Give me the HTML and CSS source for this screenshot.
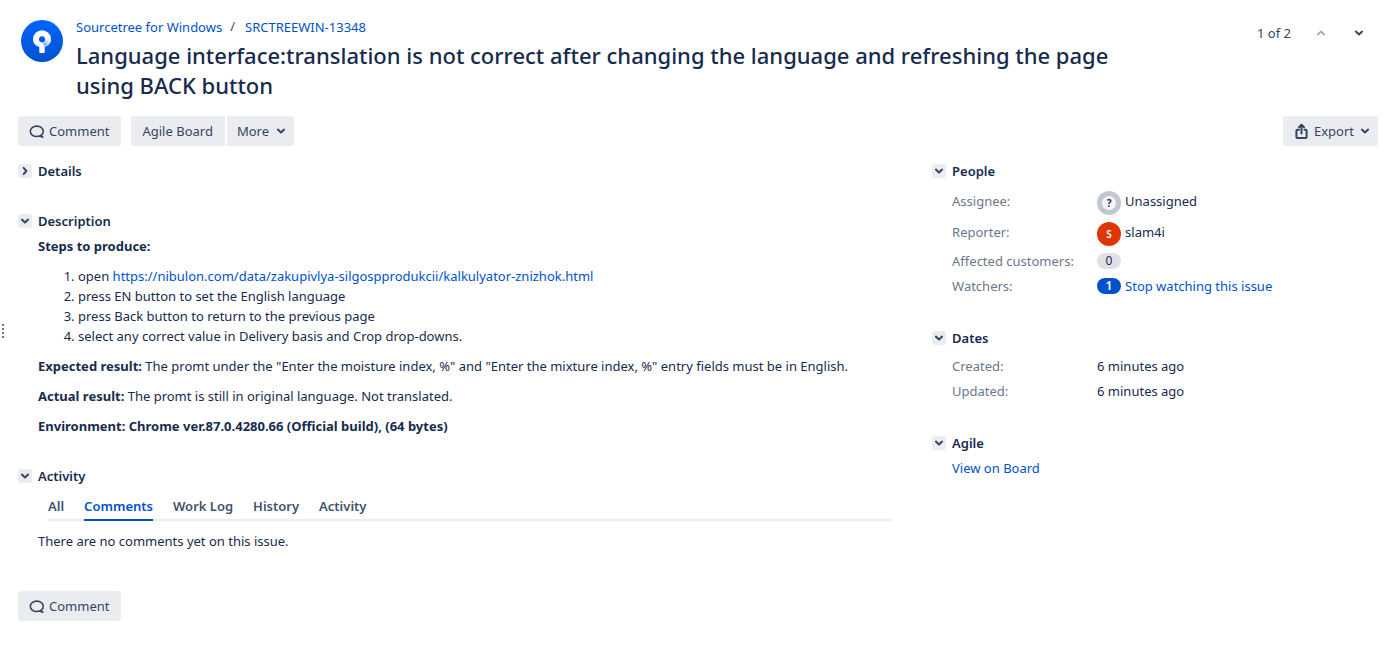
FILE: index.html
```html
<!DOCTYPE html>
<html lang="en">
<head>
<meta charset="utf-8">
<title>SRCTREEWIN-13348</title>
<link rel="stylesheet" href="styles.css">
</head>
<body>
<svg class="defs" aria-hidden="true">
  <symbol id="down" viewBox="0 0 14 14"><path d="M3.9 5.6 7 8.4l3.1-2.8" fill="none" stroke="currentColor" stroke-width="2" stroke-linecap="round" stroke-linejoin="round"/></symbol>
  <symbol id="right" viewBox="0 0 14 14"><path d="M5.6 3.9 8.4 7l-2.8 3.1" fill="none" stroke="currentColor" stroke-width="2" stroke-linecap="round" stroke-linejoin="round"/></symbol>
  <symbol id="bubble" viewBox="0 0 16 16"><path d="M12 12.500C13.500 11.600 14.300 10.100 14.300 8.300c0-3-2.900-5.200-6.500-5.200S1.300 5.300 1.300 8.300s2.900 5.200 6.500 5.200c.9 0 1.700-.1 2.500-.4l3.300 1" fill="none" stroke="currentColor" stroke-width="1.600" stroke-linejoin="round" stroke-linecap="round"/><path d="m11.600 12.600 2 1.500" stroke="currentColor" stroke-width="1.600" stroke-linecap="round"/></symbol>
</svg>
<button class="rail" aria-label="Expand sidebar"><i></i><i></i><i></i><i></i></button>
<header class="header">
  <svg class="logo" viewBox="0 0 42 42" aria-hidden="true">
    <defs>
      <linearGradient id="disc" x1="0" y1="0" x2="0" y2="1"><stop offset="0" stop-color="#0065ff"/><stop offset="1" stop-color="#0052cc"/></linearGradient>
      <linearGradient id="shade" x1="1" y1="0" x2="0" y2="1"><stop offset=".2" stop-color="#e6effd"/><stop offset="1" stop-color="#5b93ec"/></linearGradient>
    </defs>
    <circle cx="21" cy="21" r="21" fill="url(#disc)"/>
    <path d="M21 10.200a9 9 0 0 0-9 9c0 3.600 2.600 6.600 6.300 7.600v5.100c0 .7.500 1.200 1.200 1.200h3c.7 0 1.200-.5 1.200-1.200v-5.100C27.400 25.800 30 22.800 30 19.200a9 9 0 0 0-9-9Z" fill="#fff"/>
    <path d="M30 19.200a9 9 0 0 1-6.300 7.600l-2.700-4.600L24 19.200Z" fill="url(#shade)"/>
    <circle cx="21" cy="19.200" r="3" fill="#005be6"/>
  </svg>
  <div class="heading">
    <nav class="crumbs" aria-label="Breadcrumbs"><a href="#">Sourcetree for Windows</a><span class="slash">/</span><a href="#">SRCTREEWIN-13348</a></nav>
    <h1>Language interface:translation is not correct after changing the language and refreshing the page using BACK button</h1>
  </div>
  <div class="pager">
    <span>1 of 2</span>
    <button class="step step-off" aria-label="Previous issue" disabled><svg class="chev flip"><use href="#down"/></svg></button>
    <button class="step" aria-label="Next issue"><svg class="chev"><use href="#down"/></svg></button>
  </div>
</header>
<div class="toolbar">
  <button class="btn"><svg class="icon"><use href="#bubble"/></svg>Comment</button>
  <div class="group">
    <button class="btn first">Agile Board</button>
    <button class="btn last">More<svg class="chev arrow"><use href="#down"/></svg></button>
  </div>
  <button class="btn export"><svg class="icon" viewBox="0 0 16 16" fill="none" stroke="currentColor" stroke-width="2" stroke-linecap="round" stroke-linejoin="round"><path d="M5 6.800H3.400a1 1 0 0 0-1 1V14a1 1 0 0 0 1 1h8.200a1 1 0 0 0 1-1V7.800a1 1 0 0 0-1-1H10.500M7.500 10.500V1.800M5 4.200 7.500 1.700 10 4.200"/></svg>Export<svg class="chev arrow"><use href="#down"/></svg></button>
</div>
<div class="columns">
  <main>
    <section class="module">
      <h2><button class="toggle" aria-label="Toggle Details"><svg class="chev"><use href="#right"/></svg></button>Details</h2>
    </section>
    <section class="module">
      <h2><button class="toggle" aria-label="Toggle Description"><svg class="chev"><use href="#down"/></svg></button>Description</h2>
      <div class="body prose">
        <p><b>Steps to produce:</b></p>
        <ol>
          <li>open <a href="#">https://nibulon.com/data/zakupivlya-silgospprodukcii/kalkulyator-znizhok.html</a></li>
          <li>press EN button to set the English language</li>
          <li>press Back button to return to the previous page</li>
          <li>select any correct value in Delivery basis and Crop drop-downs.</li>
        </ol>
        <p><b>Expected result:</b> The promt under the "Enter the moisture index, %" and "Enter the mixture index, %" entry fields must be in English.</p>
        <p><b>Actual result:</b> The promt is still in original language. Not translated.</p>
        <p><b>Environment: Chrome ver.87.0.4280.66 (Official build), (64 bytes)</b></p>
      </div>
    </section>
    <section class="module">
      <h2><button class="toggle" aria-label="Toggle Activity"><svg class="chev"><use href="#down"/></svg></button>Activity</h2>
      <nav class="tabs" aria-label="Activity">
        <a href="#">All</a><a href="#" class="active">Comments</a><a href="#">Work Log</a><a href="#">History</a><a href="#">Activity</a>
      </nav>
      <p class="empty">There are no comments yet on this issue.</p>
    </section>
    <button class="btn add"><svg class="icon"><use href="#bubble"/></svg>Comment</button>
  </main>
  <aside>
    <section class="module">
      <h2><button class="toggle" aria-label="Toggle People"><svg class="chev"><use href="#down"/></svg></button>People</h2>
      <dl class="facts people">
        <dt>Assignee:</dt>
        <dd class="person"><span class="avatar none"><span class="mark">?</span></span>Unassigned</dd>
        <dt>Reporter:</dt>
        <dd class="person"><span class="avatar red">S</span>slam4i</dd>
        <dt>Affected customers:</dt>
        <dd><span class="badge">0</span></dd>
        <dt>Watchers:</dt>
        <dd><span class="badge blue">1</span><a href="#">Stop watching this issue</a></dd>
      </dl>
    </section>
    <section class="module">
      <h2><button class="toggle" aria-label="Toggle Dates"><svg class="chev"><use href="#down"/></svg></button>Dates</h2>
      <dl class="facts">
        <dt>Created:</dt><dd>6 minutes ago</dd>
        <dt>Updated:</dt><dd>6 minutes ago</dd>
      </dl>
    </section>
    <section class="module">
      <h2><button class="toggle" aria-label="Toggle Agile"><svg class="chev"><use href="#down"/></svg></button>Agile</h2>
      <div class="body"><a href="#">View on Board</a></div>
    </section>
  </aside>
</div>
</body>
</html>
```
FILE: styles.css
```css
* { box-sizing: border-box; }
body {
  margin: 0;
  padding: 16px 19px 24px 18px;
  background: #fff;
  color: #172b4d;
  font: 13px/20px "Noto Sans", "Open Sans", sans-serif;
}
a { color: #0052cc; text-decoration: none; }
h1, h2, p, ol, dl, dd { margin: 0; }
button { border: 0; padding: 0; background: none; color: inherit; font: inherit; cursor: pointer; }
b { font-weight: 700; }
.defs { position: absolute; width: 0; height: 0; }

.rail {
  position: absolute;
  left: 2px;
  top: 324px;
  display: grid;
  gap: 2px;
}
.rail i { width: 2px; height: 2px; background: #6b778c; }

.header { display: flex; align-items: flex-start; }
.logo { flex: none; width: 42px; height: 42px; margin: 4px 13px 0 3px; }
.heading { flex: 1; padding-right: 120px; }
.crumbs { display: flex; height: 24px; padding-top: 1px; }
.slash { padding: 0 10px 0 8px; line-height: 18px; color: #42526e; }
h1 { font-size: 22px; line-height: 30px; font-weight: 500; }
.pager { display: flex; align-items: center; gap: 22px; padding: 7px 11px 0 0; color: #344563; }
.step { display: flex; width: 16px; justify-content: center; }
.step-off { color: #a5adba; }
.chev { flex: none; width: 14px; height: 14px; }
.flip { transform: rotate(180deg); }

.toolbar { display: flex; gap: 10px; margin-top: 16px; }
.group { display: flex; gap: 2px; }
.btn {
  display: flex;
  align-items: center;
  height: 30px;
  padding: 0 12px 0 11px;
  border-radius: 3px;
  background: #ebecf0;
  color: #344563;
}
.first { border-radius: 3px 0 0 3px; }
.last { padding: 0 6px 0 10px; border-radius: 0 3px 3px 0; }
.export { margin-left: auto; padding-right: 6px; }
.icon { flex: none; width: 16px; height: 16px; margin-right: 4px; }
.arrow { margin-left: 5px; }
.export .arrow { margin-left: 4px; }

.columns { display: grid; grid-template-columns: 49fr 25fr; gap: 40px; margin-top: 15px; }
.module + .module { margin-top: 30px; }
h2 { display: flex; align-items: center; gap: 6px; font-size: 13px; line-height: 20px; font-weight: 600; }
.toggle {
  display: flex;
  width: 14px;
  height: 14px;
  border-radius: 3px;
  background: #ebecf0;
  color: #344563;
}
.body { padding: 5px 0 0 20px; }
.prose > * + * { margin-top: 10px; }
ol { padding-left: 40px; }

.tabs { display: flex; gap: 20px; margin: 10px 0 0 30px; border-bottom: 2px solid #ebecf0; }
.tabs a { height: 25px; margin-bottom: -2px; color: #42526e; font-weight: 600; }
.tabs .active { border-bottom: 2px solid #0052cc; color: #0052cc; }
.empty { padding: 10px 0 0 20px; }
.add { margin-top: 40px; }

.facts {
  display: grid;
  grid-template-columns: 145px 1fr;
  row-gap: 5px;
  padding: 8px 0 2px 20px;
}
.people { padding-top: 10px; }
dt { color: #6b778c; }
dd { display: flex; align-items: center; gap: 4px; }
.person { height: 24px; align-items: flex-start; }
.person:first-of-type { margin-bottom: 2px; }
.avatar {
  display: flex;
  align-items: center;
  justify-content: center;
  width: 24px;
  height: 24px;
  border-radius: 50%;
  font-size: 10px;
  font-weight: 600;
}
.none { background: #c1c7d0; }
.mark {
  width: 14px;
  height: 14px;
  border-radius: 50%;
  background: #f4f5f7;
  font-weight: 700;
  line-height: 14px;
  text-align: center;
}
.red { background: #de350b; color: #fff; }
.badge {
  width: 24px;
  height: 16px;
  border-radius: 8px;
  background: #dfe1e6;
  font-size: 12px;
  line-height: 16px;
  text-align: center;
}
.blue { background: #0052cc; color: #fff; font-weight: 600; }
```
